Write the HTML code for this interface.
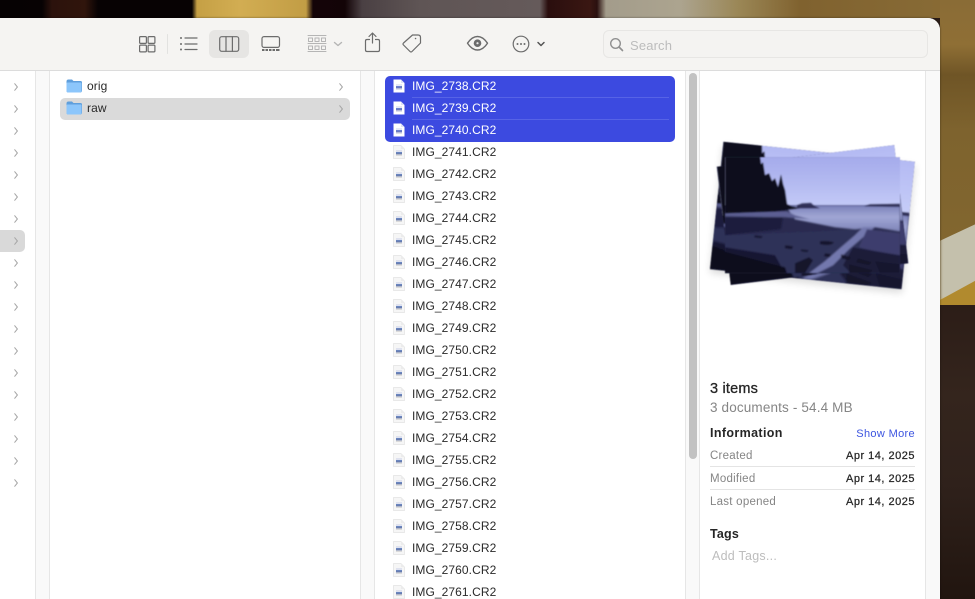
<!DOCTYPE html>
<html><head><meta charset="utf-8"><title>Finder</title>
<style>
*{box-sizing:border-box}
html,body{margin:0;padding:0;width:975px;height:599px;overflow:hidden;background:#2a1c16;font-family:"Liberation Sans",sans-serif}
.abs,.t,.r,.c,.f{position:absolute}
#win{position:absolute;left:0;top:18px;width:940px;height:600px;background:#fff;border-top-right-radius:12px;overflow:hidden;box-shadow:0 0 2px rgba(0,0,0,.45)}
#stage{position:absolute;left:0;top:0;width:975px;height:599px;overflow:hidden}
.t{font-size:12px;letter-spacing:.08px;color:#2a2a2a;line-height:16px;white-space:nowrap}
.w{color:#fff}
.f{left:392px;width:14px;height:16px}
.l{font-size:11.500px;color:#858585;letter-spacing:.25px}
.d{font-size:11px;letter-spacing:.5px;color:#262626;-webkit-text-stroke:.25px #262626}
.soft{filter:blur(1.500px)}
</style></head>
<body>
<svg width="0" height="0" style="position:absolute">
<defs>
<symbol id="doc" viewBox="0 0 14 16"><path d="M1.500 1.500h7.500l3.500 3.500v9.500h-11z" fill="#f6f6f6" stroke="#e2e2e2" stroke-width=".7"/><path d="M9 1.500v3.500h3.500" fill="#ececec"/><rect x="4" y="6.500" width="6" height="1" fill="#c8cfe8"/><rect x="4" y="8" width="6" height="1.300" fill="#6a86c0"/><rect x="4" y="9.500" width="6" height=".8" fill="#2f4688"/><rect x="4" y="10.800" width="6" height=".8" fill="#c8c8c8"/></symbol>
<symbol id="docs" viewBox="0 0 14 16"><path d="M1.500 1.500h7.500l3.500 3.500v9.500h-11z" fill="#fff"/><path d="M9 1.500v3.500h3.500" fill="#dfe2f6"/><rect x="4" y="6.500" width="6" height="1" fill="#cdd3ee"/><rect x="4" y="8" width="6" height="1.300" fill="#6a80d0"/><rect x="4" y="9.500" width="6" height=".8" fill="#2f40a0"/><rect x="4" y="10.800" width="6" height=".8" fill="#c8cadf"/></symbol>
<symbol id="chev" viewBox="0 0 6 10"><path d="M1.700 1.700l2.700 3.300-2.700 3.300" fill="none" stroke="#a6a6a6" stroke-width="1" stroke-linecap="round" stroke-linejoin="round"/></symbol>
<symbol id="folder" viewBox="0 0 16 14"><path d="M.5 2.500q0-2 2-2h3.500l1.500 1.500h7q1.500 0 1.500 1.500v8q0 2-2 2h-11.500q-2 0-2-2z" fill="#5f9fdc"/><path d="M.5 4.500q0-1 1-1h13q1 0 1 1v7.500q0 1.500-1.500 1.500h-12q-1.500 0-1.500-1.500z" fill="#8cc6fb"/></symbol>
<linearGradient id="sky" x1="0" y1="0" x2="0" y2="1"><stop offset="0" stop-color="#b4baf3"/><stop offset="1" stop-color="#c6cdf8"/></linearGradient>
<linearGradient id="ov" x1="0" y1="0" x2="0" y2="1"><stop offset="0" stop-color="#8a90dc" stop-opacity=".35"/><stop offset="1" stop-color="#8a90dc" stop-opacity=".05"/></linearGradient>
<linearGradient id="wat" x1="0" y1="0" x2="0" y2="1"><stop offset="0" stop-color="#7a80b8"/><stop offset=".45" stop-color="#a0a6d4"/><stop offset="1" stop-color="#7e84b8"/></linearGradient>
<filter id="bl" x="-5%" y="-5%" width="110%" height="110%"><feGaussianBlur stdDeviation=".6"/></filter>
<filter id="bl2" x="-10%" y="-10%" width="120%" height="120%"><feGaussianBlur stdDeviation=".9"/></filter>
<filter id="sh" x="-15%" y="-15%" width="130%" height="130%"><feGaussianBlur stdDeviation="4"/></filter>
<clipPath id="pc"><rect x="0" y="0" width="175" height="116"/></clipPath>
<g id="scene" clip-path="url(#pc)">
<rect width="175" height="116" fill="#2a2b50"/>
<rect width="175" height="48" fill="url(#sky)"/>
<g filter="url(#bl2)">
<path d="M60 48H175V74L150 70 130 72 110 70 70 62z" fill="url(#wat)"/>
<path d="M0 54L62 54 70 58 85 62 60 60 0 59z" fill="#5b5f92"/>
<path d="M0 60L58 60 56 72 0 78z" fill="#1d1e3c"/>
<path d="M0 78L100 74 128 72 175 74V116H0z" fill="#2f3059"/>
<path d="M138 70L150 70 138 80 124 92 108 108 92 116 84 116 100 104 116 90 130 78z" fill="#7378ad"/>
<path d="M142 72L175 76V100L134 90z" fill="#3c3d6d"/>
<path d="M0 90L50 98 60 116H0z" fill="#181932"/>
<path d="M-2 94L60 110 62 116H-2z" fill="#0d0e1e"/>
<path d="M128 90L175 98V116H126L118 108z" fill="#1c1d39"/>
<path d="M95 84q8-1 14 1q-2 4-14 2zM116 97l10 3-2 3-8-2zM133 101l14 4-3 3-13-3zM124 107l24 6-4 3h-20zM100 96l6 1-1 3-6-1zM70 106l14-6 4 3-8 13h-10zM60 88l8 1-1 3-7-1z" fill="#12132a"/>
<path d="M150 104l25 3v9h-20zM30 78l8 1-2 2-7-1zM76 92l8 1-2 2-6-1z" fill="#16172f"/>
</g>
<g filter="url(#bl)">
<path d="M0 -2H35L36 7 38 5 40 18 44 16 47 24 50 21 53 30 56 17 58 27 60 33 62 47 66 49 75 51 50 54 0 56z" fill="#0b0d1c"/>
<path d="M72 48l5-2 9-.500 3 3 6 2.500H72zM139 49l6-2 30-.500v3z" fill="#2d2f55"/>
</g>
</g>
</defs>
</svg>

<div id="stage">
<!-- wallpaper -->
<div class="abs" style="left:0;top:0;width:975px;height:18px;background:linear-gradient(90deg,#060203 0,#070203 42px,#2c120c 52px,#30150c 85px,#070203 98px,#070203 192px,#c5a045 197px,#d2ad52 240px,#c29d45 306px,#140408 313px,#130407 345px,#4a4043 362px,#5f5555 420px,#655a5a 540px,#2a0e0e 548px,#3a1712 590px,#2a100f 597px,#a39c8b 606px,#aca48f 680px,#9a8655 740px,#80622f 800px,#876a35 930px,#8e6a2e 975px)"></div>
<div class="abs" style="left:940px;top:0;width:35px;height:305px;background:linear-gradient(180deg,#8a6c36 0,#8f6f35 45px,#6f5526 75px,#7e632e 130px,#846830 305px)"></div>
<div class="abs" style="left:930px;top:270px;width:55px;height:35px;background:#b18a2e;clip-path:polygon(0 100%,100% 0,100% 100%)"></div>
<div class="abs soft" style="left:940px;top:222px;width:40px;height:78px;background:#c4c0ac;clip-path:polygon(0 24%,100% 0,100% 72%,0 100%)"></div>
<div class="abs" style="left:940px;top:305px;width:35px;height:294px;background:linear-gradient(180deg,#2c1d17,#34251d 90px,#2f211b 180px,#21150f)"></div>

<div id="win">
<div class="abs" style="left:0;top:0;width:940px;height:53px;background:#f5f4f2;border-bottom:1px solid #dcdcdc"></div>
<!-- column gutters -->
<div class="abs" style="left:35px;top:53px;width:15px;height:547px;background:#f9f9f9;border-left:1px solid #e6e6e6;border-right:1px solid #e6e6e6"></div>
<div class="abs" style="left:360px;top:53px;width:15px;height:547px;background:#f9f9f9;border-left:1px solid #e6e6e6;border-right:1px solid #e6e6e6"></div>
<div class="abs" style="left:685px;top:53px;width:15px;height:547px;background:#f9f9f9;border-left:1px solid #e6e6e6;border-right:1px solid #e6e6e6"></div>
<div class="abs" style="left:925px;top:53px;width:15px;height:547px;background:#f9f9f9;border-left:1px solid #e6e6e6"></div>
<div class="abs" style="left:689px;top:55px;width:8px;height:386px;border-radius:4px;background:#c2c2c2"></div>
<div class="abs" style="left:0;top:212px;width:25px;height:22px;background:#d9d9d9;border-radius:0 5px 5px 0"></div>
<div class="abs" style="left:60px;top:80px;width:290px;height:22px;background:#dadada;border-radius:5px"></div>
<div class="abs" style="left:385px;top:58px;width:290px;height:66px;background:#3c4ae0;border-radius:5px"></div>
<div class="abs" style="left:412px;top:79px;width:257px;height:1px;background:#5663e6"></div>
<div class="abs" style="left:412px;top:101px;width:257px;height:1px;background:#5663e6"></div>
<!-- search -->
<div class="abs" style="left:603px;top:12px;width:325px;height:28px;border:1px solid #e7e6e4;border-radius:6px;background:#f4f3f1"></div>
<div class="abs" style="left:209px;top:12px;width:40px;height:28px;border-radius:6px;background:#e6e5e3"></div>
</div>

<!-- toolbar icons -->
<svg class="abs" style="left:0;top:0" width="975" height="70" fill="none" stroke-linecap="round" stroke-linejoin="round">
<g stroke="#6c6c6c" stroke-width="1.200">
<rect x="139.600" y="36.600" width="6.800" height="6.800" rx="1"/><rect x="148.100" y="36.600" width="6.800" height="6.800" rx="1"/><rect x="139.600" y="45.100" width="6.800" height="6.800" rx="1"/><rect x="148.100" y="45.100" width="6.800" height="6.800" rx="1"/>
<path d="M185 38h12M185 44h12M185 49.500h12"/>
<rect x="219.700" y="36.700" width="19" height="14.600" rx="2"/><path d="M226 36.700v14.600M232.400 36.700v14.600"/>
<rect x="262" y="36.600" width="17.500" height="10.800" rx="2"/>
<path d="M372.500 43V33.500M369 36.500l3.500-3.500 3.500 3.500M369.500 39.500h-2.500q-1.500 0-1.500 1.500v9q0 1.500 1.500 1.500h11q1.500 0 1.500-1.500v-9q0-1.500-1.500-1.500h-2.500"/>
<path d="M412.500 35h5.500q2.500 0 2.500 2.500v5.500l-8.500 8.500q-1 1-2 0l-6.500-6.500q-1-1 0-2z"/>
<path d="M467.500 43.200q4.500-6.700 10-6.700t10 6.700q-4.500 6.800-10 6.800t-10-6.800z" stroke-width="1.400"/>
<circle cx="521" cy="44" r="7.800"/>
<path d="M538 42.500l3 3 3-3" stroke="#555" stroke-width="1.500"/>
</g>
<circle cx="477.500" cy="43.200" r="3.800" fill="#6c6c6c"/><circle cx="477.500" cy="43.200" r="1.100" fill="#e9e9e9"/>
<g fill="#6c6c6c"><circle cx="517.500" cy="44" r="1"/><circle cx="521" cy="44" r="1"/><circle cx="524.500" cy="44" r="1"/>
<circle cx="181" cy="38" r="1"/><circle cx="181" cy="44" r="1"/><circle cx="181" cy="49.500" r="1"/>
<path d="M262 49h2.500v2h-2.500zM265.500 49h2.500v2h-2.500zM269 49h2.500v2h-2.500zM272.500 49h2.500v2h-2.500zM276 49h3.500v2h-3.500z"/></g>
<path d="M167.500 34.500v19" stroke="#e2e2e0"/>
<path d="M415.500 38.500h.1" stroke="#6c6c6c" stroke-width="1.500"/>
<g stroke="#b5b5b5" stroke-width="1">
<path d="M308 35.500h18M308 43.500h18M308 51.500h18"/>
<rect x="308.500" y="38" width="4" height="3.500"/><rect x="315" y="38" width="4" height="3.500"/><rect x="321.500" y="38" width="4" height="3.500"/>
<rect x="308.500" y="46" width="4" height="3.500"/><rect x="315" y="46" width="4" height="3.500"/><rect x="321.500" y="46" width="4" height="3.500"/>
<path d="M334.500 42.500l3.500 3 3.500-3" stroke-width="1.400"/>
</g>
<circle cx="615.500" cy="43.500" r="4.800" stroke="#909090" stroke-width="1.400"/><path d="M619 47l3.500 3.500" stroke="#909090" stroke-width="1.600"/>
</svg>
<div class="t" style="left:630px;top:38px;font-size:13px;letter-spacing:.15px;color:#bcbcbc">Search</div>

<!-- left column chevrons -->
<svg class="abs" style="left:13px;top:0" width="6" height="599">
<use href="#chev" x="0" y="82" width="6" height="10"/><use href="#chev" x="0" y="104" width="6" height="10"/><use href="#chev" x="0" y="126" width="6" height="10"/><use href="#chev" x="0" y="148" width="6" height="10"/><use href="#chev" x="0" y="170" width="6" height="10"/><use href="#chev" x="0" y="192" width="6" height="10"/><use href="#chev" x="0" y="214" width="6" height="10"/><use href="#chev" x="0" y="236" width="6" height="10"/><use href="#chev" x="0" y="258" width="6" height="10"/><use href="#chev" x="0" y="280" width="6" height="10"/><use href="#chev" x="0" y="302" width="6" height="10"/><use href="#chev" x="0" y="324" width="6" height="10"/><use href="#chev" x="0" y="346" width="6" height="10"/><use href="#chev" x="0" y="368" width="6" height="10"/><use href="#chev" x="0" y="390" width="6" height="10"/><use href="#chev" x="0" y="412" width="6" height="10"/><use href="#chev" x="0" y="434" width="6" height="10"/><use href="#chev" x="0" y="456" width="6" height="10"/><use href="#chev" x="0" y="478" width="6" height="10"/>
</svg>

<!-- folders -->
<svg class="abs" style="left:66px;top:79px" width="16" height="14"><use href="#folder"/></svg>
<svg class="abs" style="left:66px;top:101px" width="16" height="14"><use href="#folder"/></svg>
<div class="t" style="left:87px;top:78px">orig</div>
<div class="t" style="left:87px;top:100px">raw</div>
<svg class="abs" style="left:338px;top:82px" width="6" height="10"><use href="#chev"/></svg>
<svg class="abs" style="left:338px;top:104px" width="6" height="10"><use href="#chev"/></svg>

<!-- files -->
<svg class="f" style="top:78px"><use href="#docs"/></svg><div class="t w" style="left:412px;top:78px">IMG_2738.CR2</div>
<svg class="f" style="top:100px"><use href="#docs"/></svg><div class="t w" style="left:412px;top:100px">IMG_2739.CR2</div>
<svg class="f" style="top:122px"><use href="#docs"/></svg><div class="t w" style="left:412px;top:122px">IMG_2740.CR2</div>
<svg class="f" style="top:144px"><use href="#doc"/></svg><div class="t" style="left:412px;top:144px">IMG_2741.CR2</div>
<svg class="f" style="top:166px"><use href="#doc"/></svg><div class="t" style="left:412px;top:166px">IMG_2742.CR2</div>
<svg class="f" style="top:188px"><use href="#doc"/></svg><div class="t" style="left:412px;top:188px">IMG_2743.CR2</div>
<svg class="f" style="top:210px"><use href="#doc"/></svg><div class="t" style="left:412px;top:210px">IMG_2744.CR2</div>
<svg class="f" style="top:232px"><use href="#doc"/></svg><div class="t" style="left:412px;top:232px">IMG_2745.CR2</div>
<svg class="f" style="top:254px"><use href="#doc"/></svg><div class="t" style="left:412px;top:254px">IMG_2746.CR2</div>
<svg class="f" style="top:276px"><use href="#doc"/></svg><div class="t" style="left:412px;top:276px">IMG_2747.CR2</div>
<svg class="f" style="top:298px"><use href="#doc"/></svg><div class="t" style="left:412px;top:298px">IMG_2748.CR2</div>
<svg class="f" style="top:320px"><use href="#doc"/></svg><div class="t" style="left:412px;top:320px">IMG_2749.CR2</div>
<svg class="f" style="top:342px"><use href="#doc"/></svg><div class="t" style="left:412px;top:342px">IMG_2750.CR2</div>
<svg class="f" style="top:364px"><use href="#doc"/></svg><div class="t" style="left:412px;top:364px">IMG_2751.CR2</div>
<svg class="f" style="top:386px"><use href="#doc"/></svg><div class="t" style="left:412px;top:386px">IMG_2752.CR2</div>
<svg class="f" style="top:408px"><use href="#doc"/></svg><div class="t" style="left:412px;top:408px">IMG_2753.CR2</div>
<svg class="f" style="top:430px"><use href="#doc"/></svg><div class="t" style="left:412px;top:430px">IMG_2754.CR2</div>
<svg class="f" style="top:452px"><use href="#doc"/></svg><div class="t" style="left:412px;top:452px">IMG_2755.CR2</div>
<svg class="f" style="top:474px"><use href="#doc"/></svg><div class="t" style="left:412px;top:474px">IMG_2756.CR2</div>
<svg class="f" style="top:496px"><use href="#doc"/></svg><div class="t" style="left:412px;top:496px">IMG_2757.CR2</div>
<svg class="f" style="top:518px"><use href="#doc"/></svg><div class="t" style="left:412px;top:518px">IMG_2758.CR2</div>
<svg class="f" style="top:540px"><use href="#doc"/></svg><div class="t" style="left:412px;top:540px">IMG_2759.CR2</div>
<svg class="f" style="top:562px"><use href="#doc"/></svg><div class="t" style="left:412px;top:562px">IMG_2760.CR2</div>
<svg class="f" style="top:584px"><use href="#doc"/></svg><div class="t" style="left:412px;top:584px">IMG_2761.CR2</div>

<!-- preview -->
<svg class="abs" style="left:700px;top:125px" width="225" height="180" viewBox="700 125 225 180">
<polygon points="723,146 915,166 902,293 710,273" fill="#000" opacity=".14" filter="url(#sh)"/>
<g filter="url(#bl)">
<use href="#scene" transform="matrix(1.095 .114 -.115 1.100 723.300 141.700)"/>
<use href="#scene" transform="matrix(1.015 -.124 .121 1.020 716.700 166.700)"/>
<use href="#scene" transform="translate(725 157.300)"/>
<path transform="translate(725 157.300)" d="M35 0H175V48H62L60 33 58 27 56 17 53 30 50 21 47 24 44 16 40 18 38 5 36 7z" fill="url(#ov)"/>
</g>
</svg>

<!-- info -->
<div class="t" style="left:710px;top:380px;font-size:14.500px;line-height:18px;letter-spacing:.2px;color:#262626;-webkit-text-stroke:.3px #262626">3 items</div>
<div class="t" style="left:710px;top:400px;font-size:13.500px;letter-spacing:.15px;color:#858585">3 documents - 54.4 MB</div>
<div class="t" style="left:710px;top:425px;font-size:12.500px;letter-spacing:.37px;font-weight:700;color:#262626">Information</div>
<div class="t" style="right:60px;top:426px;font-size:11px;letter-spacing:.34px;color:#3d55e0">Show More</div>
<div class="t l" style="left:710px;top:448px">Created</div>
<div class="t d" style="right:60px;top:448px">Apr 14, 2025</div>
<div class="abs" style="left:710px;top:466px;width:205px;height:1px;background:#e4e4e4"></div>
<div class="t l" style="left:710px;top:471px">Modified</div>
<div class="t d" style="right:60px;top:471px">Apr 14, 2025</div>
<div class="abs" style="left:710px;top:489px;width:205px;height:1px;background:#e4e4e4"></div>
<div class="t l" style="left:710px;top:494px">Last opened</div>
<div class="t d" style="right:60px;top:494px">Apr 14, 2025</div>
<div class="t" style="left:710px;top:526px;font-size:12.500px;letter-spacing:.2px;font-weight:700;color:#262626">Tags</div>
<div class="t" style="left:712px;top:548px;font-size:12.500px;letter-spacing:.25px;color:#bdbdbd">Add Tags...</div>
</div>
</body></html>
